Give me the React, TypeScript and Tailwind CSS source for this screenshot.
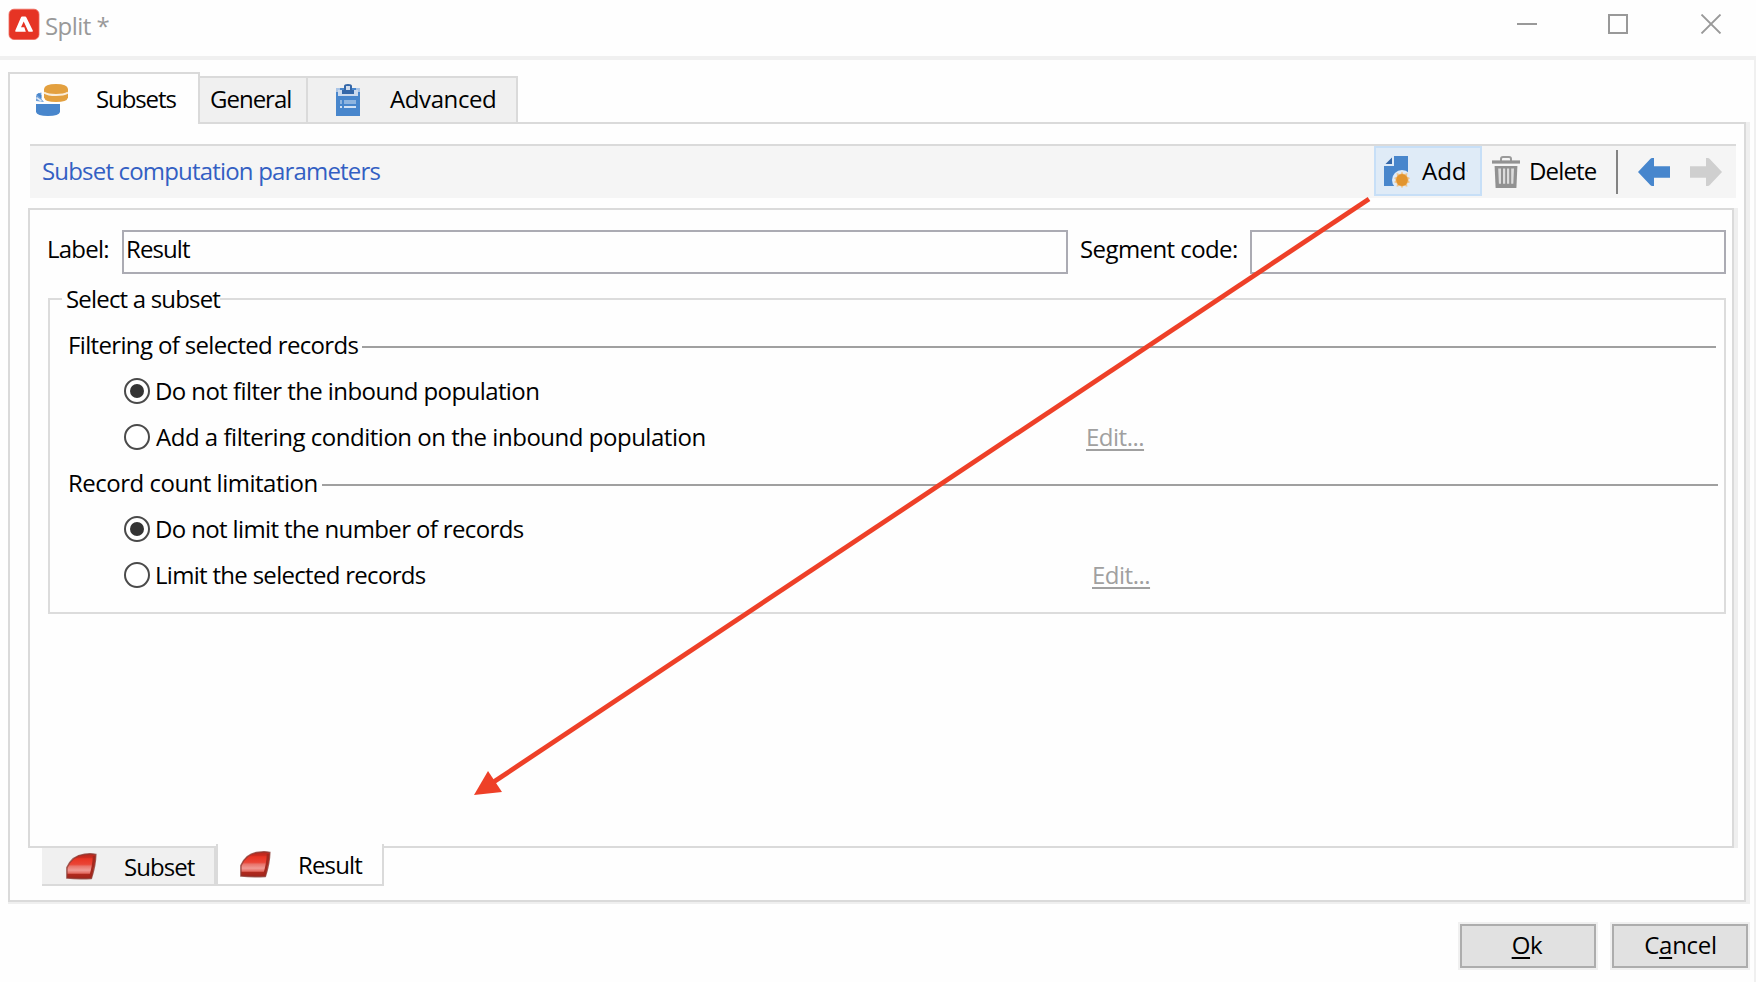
import { useState } from "react";

function LogoIcon() {
  return (
    <svg className="h-8 w-8 shrink-0" viewBox="0 0 32 32">
      <rect x="1" y="1.2" width="30" height="30.3" rx="5" fill="#e63424" stroke="#ee6a5e" strokeWidth="0.8" />
      <path
        d="M12.9 9.4 Q13.3 8.6 14.1 8.6 H17.1 Q18 8.6 18.4 9.4 L24.8 22.6 Q25.2 23.8 24.1 23.8 H21.4 Q20.5 23.8 20.1 22.9 L15.7 13.6 L13 19.2 H16.3 L17.8 23.8 H8 Q6.8 23.8 7.3 22.4 Z"
        fill="#fff"
      />
    </svg>
  );
}

function SubsetsIcon() {
  return (
    <svg className="h-8 w-8 shrink-0" viewBox="0 0 32 32">
      <path d="M0 20 H24 V28 Q23 32 12 32 Q1 32 0 28 Z" fill="#4886cc" />
      <path d="M0 17 V12 Q1 9.4 5.4 8.6 V15 L8 18 Z" fill="#6f9fd8" />
      <path d="M0.4 10.4 L3 9 L5.4 11.6 V14.4 Z" fill="#4886cc" />
      <path d="M0.4 13.6 L5.4 17" stroke="#dde8f5" strokeWidth="1.6" />
      <path d="M8 5 Q8.6 0 20 0 Q31.4 0 32 5 V13.4 Q31 18 20 18 Q9 18 8 13.4 Z" fill="#e3a03f" />
      <path d="M8 8.6 Q12 11 20 11 Q28 11 32 8.6" fill="none" stroke="#faedda" strokeWidth="2" />
    </svg>
  );
}

function ClipboardIcon() {
  return (
    <svg className="h-8 w-6 shrink-0" viewBox="0 0 24 32">
      <rect y="4" width="24" height="28" fill="#4886cc" />
      <path d="M0 4 H4 V6 H2 V8 H0 Z" fill="#a9c4e6" />
      <path d="M24 4 H20 V6 H22 V8 H24 Z" fill="#a9c4e6" />
      <path d="M2 6 H22 V12 H2 Z" fill="#cbdaed" />
      <path d="M6 10 V6 H8 V2 Q8 0 12 0 Q16 0 16 2 V6 H18 V10 Z" fill="#3467a8" />
      <rect x="10" y="2" width="4" height="4" fill="#d0dced" />
      <path d="M4 16 H6 V20 H4 Z M8 16 H20 V20 H8 Z" fill="#8fb5e0" />
      <path d="M4 22 H6 V24 H4 Z M8 22 H20 V24 H8 Z" fill="#d3e2f4" />
    </svg>
  );
}

function AddIcon() {
  return (
    <svg className="h-8 w-[26px] shrink-0" viewBox="0 0 26 32">
      <path d="M10 0 H24 V30 H0 V10 H10 Z" fill="#4886cc" />
      <path d="M1.5 8 L8 1.5 V8 Z" fill="#3467a8" />
      <circle cx="18" cy="24" r="10" fill="#dfebf7" />
      <path
        d="M18 15.6 L19.7 18.2 L23.4 17 L23 20.6 L26 22 L24.2 24 L26 26.2 L23 27.4 L23.4 30.8 L19.7 29.8 L18 32.2 L16.3 29.8 L12.6 30.8 L13 27.4 L10 26.2 L11.8 24 L10 22 L13 20.6 L12.6 17 L16.3 18.2 Z"
        fill="#efc48b"
      />
      <circle cx="18" cy="24" r="5.9" fill="#e2952f" />
    </svg>
  );
}

function TrashIcon() {
  return (
    <svg className="h-8 w-7 shrink-0" viewBox="0 0 28 32">
      <path d="M9 5 V3 Q9 1 11 1 H17 Q19 1 19 3 V5" fill="none" stroke="#9a9a9a" strokeWidth="2" />
      <rect y="4.4" width="28" height="3.2" fill="#929292" />
      <path d="M2.6 10 H25.4 L24.4 32 H3.6 Z" fill="#919191" />
      <path d="M6.2 12.4 H9 V27.8 H6.9 Z M11 12.4 H13.2 V27.8 H11 Z M15 12.4 H17.2 V27.8 H15 Z M19.2 12.4 H22 L21.3 27.8 H19.2 Z" fill="#dcdcdc" />
    </svg>
  );
}

function ArrowIcon({ flip }: { flip?: boolean }) {
  return (
    <svg className={flip ? "h-7 w-8 shrink-0 -scale-x-100" : "h-7 w-8 shrink-0"} viewBox="0 0 32 28">
      <path d="M0 14 L12 1.2 Q13 0 14.4 0 H16 V8.2 H32 V19.8 H16 V28 H14.4 Q13 28 12 26.8 Z" fill={flip ? "#cfcfcf" : "#4786cd"} />
    </svg>
  );
}

function SegmentIcon() {
  return (
    <svg className="h-[27px] w-[31px] shrink-0" viewBox="0 0 31 27">
      <defs>
        <linearGradient id="seg" x1="0" y1="0" x2="0" y2="1">
          <stop offset="0" stopColor="#b5281e" />
          <stop offset="0.14" stopColor="#c92b1f" />
          <stop offset="0.2" stopColor="#e83423" />
          <stop offset="0.42" stopColor="#ea4436" />
          <stop offset="0.5" stopColor="#e9756c" />
          <stop offset="0.66" stopColor="#f09a94" />
          <stop offset="0.78" stopColor="#e36a60" />
          <stop offset="0.82" stopColor="#b02a1e" />
          <stop offset="1" stopColor="#a0241b" />
        </linearGradient>
      </defs>
      <path d="M0.9 25 V14.6 Q6 2.6 18.5 1.2 Q25 0.4 29.8 1.4 Q29.6 12 25.4 25.4 Q12 26.2 0.9 25 Z" fill="url(#seg)" stroke="#8c3a32" strokeWidth="1.5" strokeOpacity="0.8" />
      <path d="M28 3 Q27.8 12 24.2 24.4" fill="none" stroke="#a3281d" strokeWidth="2.4" />
    </svg>
  );
}

function GroupLine({ text, textClass, lineClass }: { text: string; textClass: string; lineClass: string }) {
  return (
    <div className="mt-3.5 flex h-8 pl-[18px]">
      <span className={textClass}>{text}</span>
      <span className={lineClass} />
    </div>
  );
}

type RadioRowProps = { text: string; textClass: string; checked: boolean; onSelect: () => void; edit?: boolean };

function RadioRow({ text, textClass, checked, onSelect, edit }: RadioRowProps) {
  return (
    <div className="mt-3.5 flex h-8 pl-[74px]">
      <button
        type="button"
        role="radio"
        aria-checked={checked}
        aria-label={text}
        onClick={onSelect}
        className="mt-[3px] flex size-[26px] shrink-0 items-center justify-center rounded-full border-2 border-[#4a4a4a] bg-white"
      >
        {checked && <span className="size-3.5 rounded-full bg-[#333]" />}
      </button>
      <span className={textClass}>{text}</span>
      {edit && (
        <a className="tracking-[-0.5px] text-[#a0a0a0] underline decoration-2 underline-offset-[3px] [text-decoration-skip-ink:none]">Edit...</a>
      )}
    </div>
  );
}

export default function App() {
  const [filter, setFilter] = useState(0);
  const [limit, setLimit] = useState(0);

  return (
    <div className="relative flex h-[982px] w-[1756px] flex-col overflow-hidden bg-[#fefefe] font-['Open_Sans',sans-serif] text-[24px] leading-8 whitespace-nowrap text-black">
      <header className="flex h-[60px] shrink-0 border-b-4 border-[#f0f0f0] pl-2">
        <div className="pt-2">
          <LogoIcon />
        </div>
        <h1 className="flex-1 pt-2.5 pl-[5px] tracking-[-0.55px] text-[#999]">Split *</h1>
        <svg className="mt-3.5 mr-[34px] h-5 w-[205px] shrink-0" viewBox="0 0 205 20" fill="none" stroke="#999" strokeWidth="2">
          <path d="M0 10 H20" />
          <path d="M92 1 H110 V19 H92 Z" />
          <path d="M184.5 0.5 L203.5 19.5 M203.5 0.5 L184.5 19.5" strokeWidth="1.8" />
        </svg>
      </header>

      <main className="flex flex-1 flex-col border-r-2 border-[#f0f0f0] pt-3">
        <div className="ml-2 flex h-[50px] items-start">
          <div className="z-10 flex h-[52px] w-48 border-x-2 border-t-2 border-[#dadada] bg-[#fefefe] pl-[26px]">
            <span className="pt-2.5">
              <SubsetsIcon />
            </span>
            <span className="pt-[9px] pl-7 tracking-[-1.1px]">Subsets</span>
          </div>
          <div className="mt-1 flex h-[46px] w-[108px] border-t-2 border-r-2 border-[#dadada] bg-[#f0f0f0] pt-[5px] pl-2.5 tracking-[-1px]">General</div>
          <div className="mt-1 flex h-[46px] w-[210px] border-t-2 border-r-2 border-[#dadada] bg-[#f0f0f0] pl-7">
            <span className="pt-1.5">
              <ClipboardIcon />
            </span>
            <span className="pt-[5px] pl-[30px] tracking-[-0.4px]">Advanced</span>
          </div>
        </div>

        <section className="ml-2 h-[780px] w-[1738px] border-2 border-[#dadada] pt-5 shadow-[4px_0_0_0_#efefef,0_2px_0_0_#efefef,4px_2px_0_0_#efefef]">
          <div className="ml-5 flex h-[54px] w-[1706px] border-t-2 border-[#dadada] bg-[#f5f5f5]">
            <h2 className="flex-1 pt-[9px] pl-3 tracking-[-0.82px] text-[#335fc3]">Subset computation parameters</h2>
            <button type="button" className="flex h-[50px] w-[108px] border-2 border-[#c7dff7] bg-[#dfebf7] pt-2 pl-2">
              <AddIcon />
              <span className="-mt-px pl-3">Add</span>
            </button>
            <button type="button" className="ml-2.5 flex pt-2.5">
              <TrashIcon />
              <span className="-mt-px w-24 pl-[9px] text-left tracking-[-0.85px]">Delete</span>
            </button>
            <span className="mt-1 h-11 w-0.5 bg-[#838383]" />
            <div className="flex gap-5 pt-3 pr-3.5 pl-5">
              <ArrowIcon />
              <ArrowIcon flip />
            </div>
          </div>

          <div className="mt-2.5 ml-[18px] h-[640px] w-[1706px] border-2 border-[#dadada] pt-5 shadow-[4px_0_0_0_#efefef]">
            <div className="flex h-11 pl-[17px]">
              <label className="w-[75px] pt-[3px] tracking-[-0.75px]">Label:</label>
              <input
                className="h-11 w-[946px] border-2 border-[#ababb3] bg-[#fefefe] pb-[7px] pl-0.5 tracking-[-0.9px] outline-none"
                defaultValue="Result"
              />
              <label className="w-[182px] pt-[3px] pl-3 tracking-[-0.58px]">Segment code:</label>
              <input className="h-11 w-[476px] border-2 border-[#ababb3] bg-[#fefefe] outline-none" />
            </div>

            <div className="mt-6 ml-[18px] h-[316px] w-[1678px] border-2 border-[#dcdcdc]">
              <div className="-mt-[17px] ml-3 h-8 w-[158px] bg-[#fefefe] pl-1 tracking-[-0.82px]">Select a subset</div>
              <GroupLine
                text="Filtering of selected records"
                textClass="w-[294px] tracking-[-0.65px]"
                lineClass="mt-[17px] mr-2 h-0.5 flex-1 bg-[#a0a0a0]"
              />
              <RadioRow
                text="Do not filter the inbound population"
                textClass="pl-[5px] tracking-[-0.58px]"
                checked={filter === 0}
                onSelect={() => setFilter(0)}
              />
              <RadioRow
                text="Add a filtering condition on the inbound population"
                textClass="w-[936px] pl-1.5 tracking-[-0.48px]"
                checked={filter === 1}
                onSelect={() => setFilter(1)}
                edit
              />
              <GroupLine
                text="Record count limitation"
                textClass="w-[254px] tracking-[-0.5px]"
                lineClass="mt-[17px] mr-1.5 h-0.5 flex-1 bg-[#a0a0a0]"
              />
              <RadioRow
                text="Do not limit the number of records"
                textClass="pl-[5px] tracking-[-0.63px]"
                checked={limit === 0}
                onSelect={() => setLimit(0)}
              />
              <RadioRow
                text="Limit the selected records"
                textClass="w-[942px] pl-[5px] tracking-[-0.7px]"
                checked={limit === 1}
                onSelect={() => setLimit(1)}
                edit
              />
            </div>
          </div>

          <div className="-mt-1 ml-8 flex">
            <div className="mt-1 flex h-[38px] w-[174px] border-r-2 border-b-2 border-[#dadada] bg-[#f0f0f0] pl-6">
              <span className="pt-[5px]">
                <SegmentIcon />
              </span>
              <span className="pt-[3px] pl-[27px] tracking-[-0.95px]">Subset</span>
            </div>
            <div className="flex h-[42px] w-[168px] border-x-2 border-b-2 border-[#dadada] bg-[#fefefe] pl-[22px]">
              <span className="pt-[7px]">
                <SegmentIcon />
              </span>
              <span className="pt-[5px] pl-[27px] tracking-[-0.85px]">Result</span>
            </div>
          </div>
        </section>

        <footer className="mt-[22px] flex justify-end gap-4 pr-1.5">
          <button type="button" className="h-11 w-[136px] border-2 border-[#adadad] bg-[#e1e1e1] pr-0.5 pb-[3px] tracking-[-0.3px] shadow-[0_0_0_2px_#f0f0f0]">
            <span className="underline decoration-2 underline-offset-[3px]">O</span>k
          </button>
          <button type="button" className="h-11 w-[136px] border-2 border-[#adadad] bg-[#e1e1e1] pb-[3px] pl-px tracking-[-0.3px] shadow-[0_0_0_2px_#f0f0f0]">
            C<span className="underline decoration-2 underline-offset-[3px]">a</span>ncel
          </button>
        </footer>
      </main>

      <svg className="pointer-events-none absolute inset-0 z-20 h-[982px] w-[1756px]" viewBox="0 0 1756 982">
        <path d="M1369 199 L492 783" stroke="#ee4028" strokeWidth="4.8" />
        <path d="M474 795 L488 771 L502 792 Z" fill="#ee4028" />
      </svg>
    </div>
  );
}
